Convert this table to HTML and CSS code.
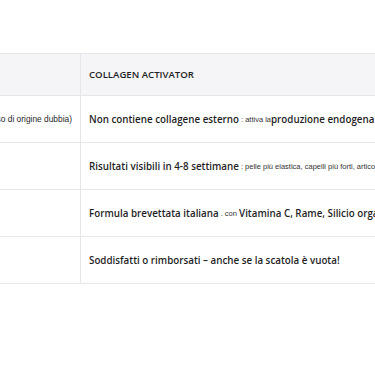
FILE: index.html
```html
<!DOCTYPE html>
<html lang="it">
<head>
    <meta charset="UTF-8">
    <meta name="viewport" content="width=device-width, initial-scale=1.0">
    <title>Confronto Collagen Activator</title>
    <link rel="stylesheet" href="styles.css">
</head>
<body>
    <div class="compare">
        <div class="compare-table">
            <div class="cell head other"></div>
            <div class="cell head ours">COLLAGEN ACTIVATOR</div>

            <div class="cell other"><span>Collagene animale (bovino o suino, spesso di origine dubbia)</span></div>
            <div class="cell ours"><b>Non contiene collagene esterno</b><small>: attiva la</small><b>produzione endogena</b><small> di collagene</small></div>

            <div class="cell other"><span></span></div>
            <div class="cell ours"><b>Risultati visibili in 4-8 settimane</b><small>: pelle più elastica, capelli più forti, articolazioni</small></div>

            <div class="cell other"><span></span></div>
            <div class="cell ours"><b>Formula brevettata italiana</b><small>. con </small><b>Vitamina C, Rame, Silicio organico</b></div>

            <div class="cell other"><span></span></div>
            <div class="cell ours"><b>Soddisfatti o rimborsati – anche se la scatola è vuota!</b></div>
        </div>
    </div>
</body>
</html>
```

FILE: styles.css
```css
body {
    margin: 0;
    padding: 0;
    background: #fff;
    color: #1f1f1f;
    font-family: "Open Sans", sans-serif;
    overflow: hidden;
}

.compare {
    padding-top: 53px;
    width: 100%;
    overflow: hidden;
}

.compare-table {
    display: grid;
    grid-template-columns: 81px 1fr;
    grid-auto-rows: 47px;
    grid-template-rows: 42px;
    border-top: 1px solid #e6e6ea;
}

.cell {
    display: flex;
    align-items: center;
    border-bottom: 1px solid #e6e6ea;
    white-space: nowrap;
    overflow: hidden;
    box-sizing: border-box;
}

.cell.head {
    background: #f5f5f7;
    font-size: 9.6px;
    font-weight: 600;
}

/* left column is scrolled out of view, only the tail of its text shows */
.cell.other {
    justify-content: flex-end;
    padding-right: 8px;
    border-right: 1px solid #e6e6ea;
    font-family: "Liberation Sans", Arial, sans-serif;
    font-size: 8.4px;
}

.cell.ours {
    padding-left: 8px;
}

.cell.ours b {
    font-size: 9.8px;
    font-weight: 600;
}

.cell.ours small {
    margin-left: 2px;
    font-family: "Liberation Sans", Arial, sans-serif;
    font-size: 7.5px;
    color: #333;
    white-space: pre;
}
```
